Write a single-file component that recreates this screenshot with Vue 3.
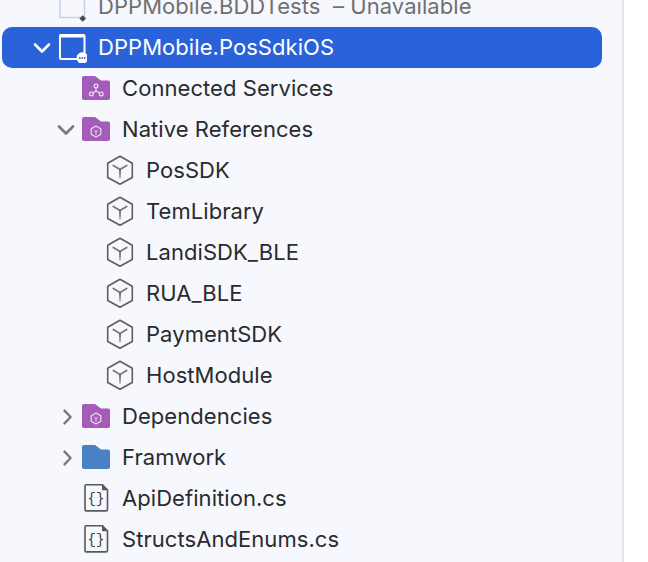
<script setup>
const rows = [
  { label: 'DPPMobile.BDDTests', suffix: '  – Unavailable', icon: 'proj', level: 2, dim: true },
  { label: 'DPPMobile.PosSdkiOS', icon: 'projsel', chevron: 'down', level: 2, selected: true },
  { label: 'Connected Services', icon: 'folder-svc', level: 3 },
  { label: 'Native References', icon: 'folder-pkg', chevron: 'down', level: 3 },
  { label: 'PosSDK', icon: 'cube', level: 4 },
  { label: 'TemLibrary', icon: 'cube', level: 4 },
  { label: 'LandiSDK_BLE', icon: 'cube', level: 4 },
  { label: 'RUA_BLE', icon: 'cube', level: 4 },
  { label: 'PaymentSDK', icon: 'cube', level: 4 },
  { label: 'HostModule', icon: 'cube', level: 4 },
  { label: 'Dependencies', icon: 'folder-pkg', chevron: 'right', level: 3 },
  { label: 'Framwork', icon: 'folder', chevron: 'right', level: 3 },
  { label: 'ApiDefinition.cs', icon: 'file', level: 3 },
  { label: 'StructsAndEnums.cs', icon: 'file', level: 3 },
]
const folderPath = 'M1 5Q1 3 3 3H14L20 7.5H27Q29 7.5 29 9.5V25Q29 27 27 27H3Q1 27 1 25Z'
</script>

<template>
  <div class="page">
    <aside class="sidebar">
      <ul class="tree">
        <li
          v-for="row in rows"
          :key="row.label"
          class="row"
          :class="[`level-${row.level}`, { selected: row.selected, dim: row.dim }]"
        >
          <span class="chevron">
            <svg v-if="row.chevron === 'down'" width="18" height="12" viewBox="0 0 18 12">
              <path d="M2 2.5L9 9.5L16 2.5" fill="none" stroke="currentColor" stroke-width="2.6" stroke-linecap="round" stroke-linejoin="round" />
            </svg>
            <svg v-else-if="row.chevron === 'right'" width="12" height="18" viewBox="0 0 12 18">
              <path d="M4.5 2.6L10.6 9L4.5 15.4" fill="none" stroke="currentColor" stroke-width="2.4" stroke-linecap="round" stroke-linejoin="round" />
            </svg>
          </span>

          <span class="icon">
            <svg v-if="row.icon === 'proj'" width="30" height="31" viewBox="0 0 30 31">
              <path d="M3 -3V26.5H27.5V-3" fill="none" stroke="#c3d4e8" stroke-width="1.6" />
              <path d="M25.7 24.2L29 27.5L25.7 30.8L22.4 27.5Z" fill="#4a4a4a" />
            </svg>

            <svg v-else-if="row.icon === 'projsel'" width="30" height="31" viewBox="0 0 30 31">
              <rect x="3" y="3" width="24.5" height="24" rx="1" fill="none" stroke="#fff" stroke-width="2" />
              <rect x="2.5" y="2.5" width="25.5" height="3" fill="#fff" />
              <circle cx="25.3" cy="26" r="5.8" fill="#fff" />
              <circle cx="22.8" cy="26" r="0.9" fill="#2a62d9" />
              <circle cx="25.3" cy="26" r="0.9" fill="#2a62d9" />
              <circle cx="27.8" cy="26" r="0.9" fill="#2a62d9" />
            </svg>

            <svg v-else-if="row.icon === 'folder-svc'" width="30" height="31" viewBox="0 0 30 31">
              <path :d="folderPath" fill="#a55cb8" />
              <g fill="none" stroke="#f0def5" stroke-width="1.2">
                <circle cx="15" cy="13" r="1.9" />
                <circle cx="10.4" cy="21" r="1.9" />
                <circle cx="20.2" cy="21" r="1.9" />
                <path d="M15 15V18M15 18L12 19.8M15 18L18.4 19.8" />
              </g>
            </svg>

            <svg v-else-if="row.icon === 'folder-pkg'" width="30" height="31" viewBox="0 0 30 31">
              <path :d="folderPath" fill="#a55cb8" />
              <path d="M15 12L19.8 14.8V20.2L15 23L10.2 20.2V14.8Z" fill="none" stroke="#f0def5" stroke-width="1.2" stroke-linejoin="round" />
              <path d="M12.4 15.6L15 17L17.6 15.6L15.6 18V20.8H14.4V18Z" fill="#e6c9ee" />
            </svg>

            <svg v-else-if="row.icon === 'folder'" width="30" height="31" viewBox="0 0 30 31">
              <path :d="folderPath" fill="#4a80c4" />
            </svg>

            <svg v-else-if="row.icon === 'cube'" width="30" height="31" viewBox="0 0 30 31">
              <defs>
                <linearGradient id="stem" x1="0" y1="0" x2="0" y2="1">
                  <stop offset="0" stop-color="#5d5d60" />
                  <stop offset="1" stop-color="#b4b4b8" />
                </linearGradient>
              </defs>
              <path d="M15 1.3L27.3 8.3V22.5L15 29.2L2.7 22.5V8.3Z" fill="none" stroke="#5d5d60" stroke-width="1.6" stroke-linejoin="round" />
              <path d="M8.3 10.5L15 14.5L21.7 10.5" fill="none" stroke="#77777a" stroke-width="1.7" stroke-linecap="round" />
              <rect x="14.1" y="14.5" width="1.8" height="9" fill="url(#stem)" />
            </svg>

            <svg v-else-if="row.icon === 'file'" width="30" height="31" viewBox="0 0 30 31">
              <path d="M5 1.8H21.5L26.5 7V26.5Q26.5 27.9 25 27.9H5Q4 27.9 4 26.5V3Q4 1.8 5 1.8Z" fill="none" stroke="#58585b" stroke-width="1.6" />
              <path d="M21 1L27.3 7.2H21Z" fill="#58585b" />
              <text x="15" y="19.5" class="braces">{}</text>
            </svg>
          </span>

          <span class="label">{{ row.label }}<span v-if="row.suffix" class="suffix">{{ row.suffix }}</span></span>
        </li>
      </ul>
    </aside>
  </div>
</template>

<style scoped>
.page {
  width: 648px;
  height: 562px;
  overflow: hidden;
  background: #ffffff;
}

.sidebar {
  width: 622px;
  height: 562px;
  overflow: hidden;
  background: #f6f8fd;
  border-right: 2px solid #e3e4e6;
}

.tree {
  list-style: none;
  margin: -14px 0 0;
  padding: 0 20px 0 2px;
}

.row {
  height: 41px;
  display: flex;
  align-items: center;
  color: #2a2b2d;
  font-family: Inter, "Liberation Sans", sans-serif;
  font-size: 22px;
  letter-spacing: 0.06px;
  white-space: pre;
  border-radius: 10px;
}

.label {
  margin-top: -2px;
}

.level-2 { padding-left: 48px; }
.level-3 { padding-left: 72px; }
.level-4 { padding-left: 96px; }

.selected {
  background: #2a62d9;
  color: #ffffff;
}

.dim {
  color: #6f7072;
}

.chevron {
  width: 18px;
  height: 20px;
  margin-left: -17px;
  margin-right: -1px;
  display: flex;
  align-items: center;
  justify-content: center;
  color: #78787b;
  flex: none;
}

.chevron svg {
  overflow: visible;
}

.selected .chevron {
  color: #ffffff;
}

.icon {
  width: 30px;
  height: 31px;
  margin-left: 7px;
  margin-right: 11px;
  display: flex;
  flex: none;
}

.icon svg {
  overflow: hidden;
}

.suffix {
  color: #6f7072;
}

.braces {
  font-family: "Liberation Mono", monospace;
  font-size: 14px;
  letter-spacing: 0;
  text-anchor: middle;
  fill: #3a3a3c;
}
</style>
